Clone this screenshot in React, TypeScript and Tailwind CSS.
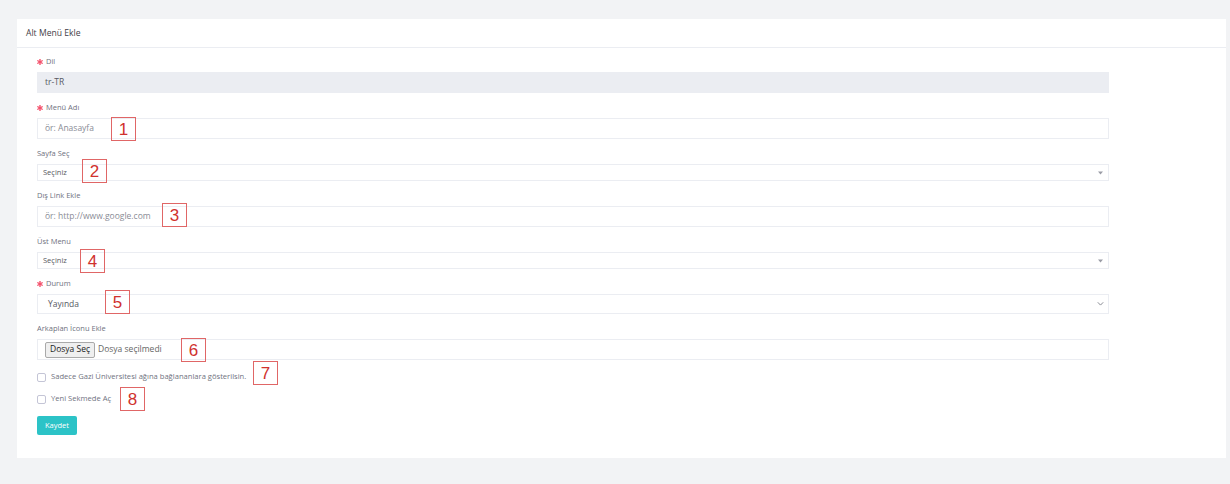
import React from "react";

const font = { fontFamily: '"Open Sans", "Liberation Sans", sans-serif' };

function Ann({ n, className }: { n: string; className: string }) {
  return (
    <div
      className={`absolute w-[25px] h-[24px] border border-[#e06666] flex items-center justify-center text-[17px] leading-none text-[#d0312d] ${className}`}
      style={{ fontFamily: '"Liberation Sans", sans-serif' }}
    >
      {n}
    </div>
  );
}

function Star() {
  return (
    <svg width="6" height="6" viewBox="0 0 6 6" className="mr-[3px] shrink-0">
      <g stroke="#f4516c" strokeWidth="1.4" strokeLinecap="round">
        <path d="M3 0.5 V5.5" />
        <path d="M0.8 1.75 L5.2 4.25" />
        <path d="M0.8 4.25 L5.2 1.75" />
      </g>
    </svg>
  );
}

function Label({ text, req }: { text: string; req?: boolean }) {
  return (
    <div className="h-[12px] flex items-center text-[7.5px] text-[#6f7280]">
      {req && <Star />}
      {text}
    </div>
  );
}

function Caret() {
  return (
    <svg className="absolute right-[5px] top-1/2 -translate-y-1/2" width="5" height="4" viewBox="0 0 5 4">
      <path d="M0 0.5 L5 0.5 L2.5 3.5 Z" fill="#9a9ca5" />
    </svg>
  );
}

function Chevron() {
  return (
    <svg className="absolute right-[4px] top-1/2 -translate-y-1/2" width="7" height="5" viewBox="0 0 7 5">
      <path d="M0.8 0.8 L3.5 3.6 L6.2 0.8" fill="none" stroke="#8a8c95" strokeWidth="1" />
    </svg>
  );
}

function Field({ children }: { children: React.ReactNode }) {
  return <div className="flex flex-col gap-[4px]">{children}</div>;
}

function CheckRow({ text, children }: { text: string; children: React.ReactNode }) {
  return (
    <div className="relative h-[12px] flex items-center gap-[5px] text-[7.6px] text-[#6f7280]">
      <span className="w-[9px] h-[9px] border border-[#c4c5d6] rounded-[2px] bg-white" />
      {text}
      {children}
    </div>
  );
}

export default function App() {
  return (
    <div className="min-h-[484px] bg-[#f2f3f5] pt-[19px] pl-[17px] pr-[4px] pb-[26px]" style={font}>
      <div className="bg-white">
        <div className="h-[29px] border-b border-[#ebedf2] flex items-center pl-[9px] text-[8.6px] text-[#3f4047]">
          Alt Menü Ekle
        </div>
        <div className="pt-[8px] pl-[20px] pb-[23px]">
          <div className="w-[1072px] flex flex-col">
            <div className="flex flex-col gap-[9px]">
              <Field>
                <Label text="Dil" req />
                <div className="h-[21px] bg-[#ebedf2] flex items-center pl-[8px] text-[8.5px] text-[#575962]">
                  tr-TR
                </div>
              </Field>

              <Field>
                <Label text="Menü Adı" req />
                <div className="relative h-[21px] border border-[#ebedf2] flex items-center pl-[7px] text-[8.5px] text-[#8a8c96]">
                  ör: Anasayfa
                  <Ann n="1" className="left-[73px] top-[-2px]" />
                </div>
              </Field>

              <Field>
                <Label text="Sayfa Seç" />
                <div className="relative h-[17px] border border-[#ebedf2] flex items-center pl-[5px] text-[7.5px] text-[#575962]">
                  Seçiniz
                  <Caret />
                  <Ann n="2" className="left-[44px] top-[-6px]" />
                </div>
              </Field>

              <Field>
                <Label text="Dış Link Ekle" />
                <div className="relative h-[21px] border border-[#ebedf2] flex items-center pl-[7px] text-[8.5px] text-[#8a8c96]">
                  ör: http://www.google.com
                  <Ann n="3" className="left-[124px] top-[-4px]" />
                </div>
              </Field>

              <Field>
                <Label text="Üst Menu" />
                <div className="relative h-[17px] border border-[#ebedf2] flex items-center pl-[5px] text-[7.5px] text-[#575962]">
                  Seçiniz
                  <Caret />
                  <Ann n="4" className="left-[42px] top-[-4px]" />
                </div>
              </Field>

              <Field>
                <Label text="Durum" req />
                <div className="relative h-[20px] border border-[#ebedf2] flex items-center pl-[10px] text-[8.5px] text-[#575962]">
                  Yayında
                  <Chevron />
                  <Ann n="5" className="left-[67px] top-[-5px]" />
                </div>
              </Field>

              <Field>
                <Label text="Arkaplan İconu Ekle" />
                <div className="relative h-[21px] border border-[#ebedf2] flex items-center gap-[3px] pl-[7px] text-[8.5px]">
                  <span className="h-[16px] px-[4px] flex items-center border border-[#a9a9a9] rounded-[2px] bg-[#efefef] text-[#222]">
                    Dosya Seç
                  </span>
                  <span className="text-[#666]">Dosya seçilmedi</span>
                  <Ann n="6" className="left-[143px] top-[-2px]" />
                </div>
              </Field>
            </div>

            <div className="flex flex-col gap-[10px] pt-[11px]">
              <CheckRow text="Sadece Gazi Üniversitesi ağına bağlananlara gösterilsin.">
                <Ann n="7" className="left-[216px] top-[-10px]" />
              </CheckRow>
              <CheckRow text="Yeni Sekmede Aç">
                <Ann n="8" className="left-[83px] top-[-6px]" />
              </CheckRow>
            </div>

            <div className="pt-[11px]">
              <button className="w-[40px] h-[19px] rounded-[2px] bg-[#2cc3c7] text-white text-[7.5px] flex items-center justify-center">
                Kaydet
              </button>
            </div>
          </div>
        </div>
      </div>
    </div>
  );
}
